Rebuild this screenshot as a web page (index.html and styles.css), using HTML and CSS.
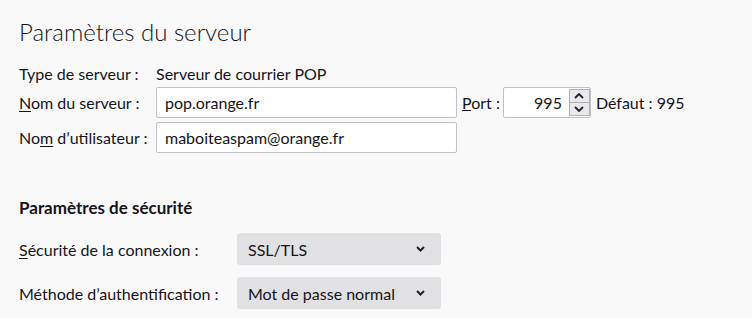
FILE: index.html
```html
<!DOCTYPE html>
<html lang="fr">
<head>
    <meta charset="UTF-8">
    <title>Paramètres du serveur</title>
    <link rel="stylesheet" href="styles.css">
</head>
<body>
    <div class="page">
        <h1 class="title">Paramètres du serveur</h1>

        <div class="server-grid">
            <span class="label">Type de serveur :</span>
            <span class="value">Serveur de courrier POP</span>

            <label class="label"><u>N</u>om du serveur :</label>
            <div class="field-row">
                <input class="text-input" type="text" value="pop.orange.fr">
                <label class="port-label"><u>P</u>ort :</label>
                <div class="spin">
                    <input class="spin-input" type="text" value="995">
                    <div class="spin-buttons">
                        <button class="spin-btn">
                            <svg width="10" height="6" viewBox="0 0 10 6"><path d="M1 5 L5 1 L9 5" fill="none" stroke="#222" stroke-width="1.8"/></svg>
                        </button>
                        <button class="spin-btn">
                            <svg width="10" height="6" viewBox="0 0 10 6"><path d="M1 1 L5 5 L9 1" fill="none" stroke="#222" stroke-width="1.8"/></svg>
                        </button>
                    </div>
                </div>
                <span class="default">Défaut : 995</span>
            </div>

            <label class="label">No<u>m</u> d’utilisateur :</label>
            <div class="field-row">
                <input class="text-input" type="text" value="maboiteaspam@orange.fr">
            </div>
        </div>

        <h2 class="section">Paramètres de sécurité</h2>

        <div class="security-grid">
            <label class="label"><u>S</u>écurité de la connexion :</label>
            <div class="select">
                <span>SSL/TLS</span>
                <svg width="9" height="6" viewBox="0 0 9 6"><path d="M1 1 L4.5 4.5 L8 1" fill="none" stroke="#222" stroke-width="2"/></svg>
            </div>

            <label class="label">Méthode d’authent<u>i</u>fication :</label>
            <div class="select">
                <span>Mot de passe normal</span>
                <svg width="9" height="6" viewBox="0 0 9 6"><path d="M1 1 L4.5 4.5 L8 1" fill="none" stroke="#222" stroke-width="2"/></svg>
            </div>
        </div>
    </div>
</body>
</html>
```

FILE: styles.css
```css
body {
    margin: 0;
    background: #f9f9fa;
    color: #15141a;
    font-family: Lato, "Open Sans", sans-serif;
    font-size: 16px;
}

.page {
    padding: 16px 19px 0 19px;
}

.title {
    margin: 0 0 16px 0;
    font-size: 24px;
    font-weight: 300;
    line-height: 32px;
}

.server-grid {
    display: grid;
    grid-template-columns: 137px auto;
    row-gap: 4px;
    align-items: center;
    line-height: 19px;
}

.label u {
    text-decoration-thickness: 1px;
    text-underline-offset: 2px;
}

.field-row {
    display: flex;
    align-items: center;
}

.text-input {
    width: 301px;
    height: 31px;
    box-sizing: border-box;
    padding: 0 8px;
    border: 1px solid #c2c2c6;
    border-radius: 2px;
    background: #fff;
    font: inherit;
    color: inherit;
}

.port-label {
    margin: 0 3px 0 5px;
}

.spin {
    display: flex;
    width: 88px;
    height: 31px;
    box-sizing: border-box;
    border: 1px solid #c2c2c6;
    border-radius: 2px;
    background: #fff;
}

.spin-input {
    width: 58px;
    border: none;
    padding: 0 7px 0 0;
    text-align: right;
    font: inherit;
    color: inherit;
    background: transparent;
}

.spin-buttons {
    display: flex;
    flex-direction: column;
    margin: 1px 0 1px 0;
    width: 28px;
}

.spin-btn {
    flex: 1;
    display: flex;
    align-items: center;
    justify-content: center;
    padding: 0;
    border: 1px solid #b0b0b4;
    background: #e9e9ed;
}

.spin-btn + .spin-btn {
    border-top: none;
}

.default {
    margin-left: 5px;
}

.section {
    margin: 45px 0 15px 0;
    font-size: 17px;
    font-weight: 700;
    line-height: 20px;
}

.security-grid {
    display: grid;
    grid-template-columns: 218px 204px;
    row-gap: 12px;
    align-items: center;
}

.select {
    height: 32px;
    display: flex;
    align-items: center;
    justify-content: space-between;
    padding: 0 16px 0 11px;
    border-radius: 3px;
    background: #e1e1e3;
}
```
